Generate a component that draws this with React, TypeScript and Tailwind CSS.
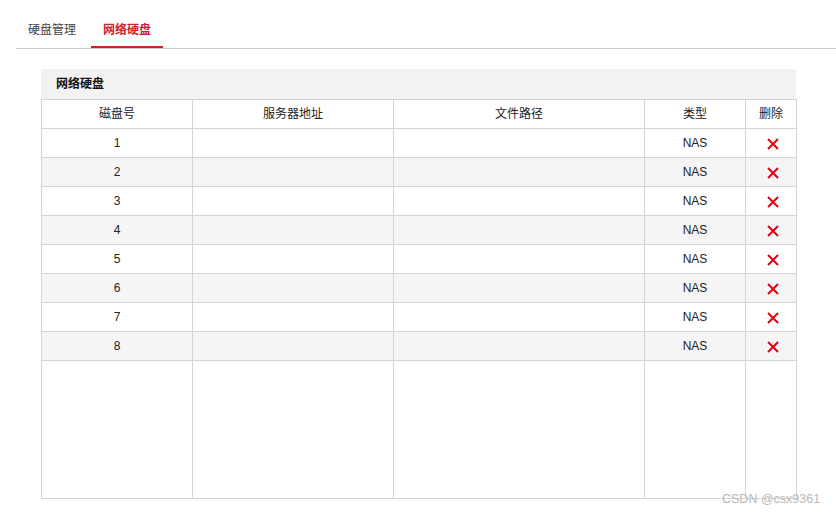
import React from "react";

const rows = [1, 2, 3, 4, 5, 6, 7, 8];

function DeleteIcon() {
  return (
    <svg width="12" height="12" viewBox="0 0 12 12" className="ml-[4px] inline-block">
      <path d="M1 1L11 11M11 1L1 11" stroke="#e60012" strokeWidth="2" />
    </svg>
  );
}

export default function App() {
  const cell = "border border-[#d4d4d4] text-center align-middle p-0";

  return (
    <div className="relative h-[513px] w-[836px] overflow-hidden bg-white text-[12px] text-[#222] font-['Liberation_Sans','Noto_Sans_CJK_SC',sans-serif]">
      <div className="ml-4 mt-[14px] flex gap-[3px] border-b border-[#cccccc]">
        <button type="button" className="h-[34px] px-3 pb-[2px] text-[12px] text-[#444]">
          硬盘管理
        </button>
        <button
          type="button"
          className="h-[34px] border-b-2 border-[#d0212e] px-3 text-[12px] font-bold text-[#d0212e]"
        >
          网络硬盘
        </button>
      </div>

      <div className="ml-[41px] mt-5 w-[755px]">
        <div className="flex h-[30px] items-center bg-[#f2f2f2] pl-[15px] font-bold text-[#111]">网络硬盘</div>
        <table className="w-[755px] table-fixed border-collapse">
          <colgroup>
            <col className="w-[151px]" />
            <col className="w-[201px]" />
            <col className="w-[251px]" />
            <col className="w-[101px]" />
            <col className="w-[51px]" />
          </colgroup>
          <thead>
            <tr className="h-[29px]">
              <th className={`${cell} font-normal`}>磁盘号</th>
              <th className={`${cell} font-normal`}>服务器地址</th>
              <th className={`${cell} font-normal`}>文件路径</th>
              <th className={`${cell} font-normal`}>类型</th>
              <th className={`${cell} font-normal`}>删除</th>
            </tr>
          </thead>
          <tbody>
            {rows.map((n) => (
              <tr key={n} className={`h-[29px] ${n % 2 === 0 ? "bg-[#f5f5f5]" : "bg-white"}`}>
                <td className={cell}>{n}</td>
                <td className={cell}></td>
                <td className={cell}></td>
                <td className={cell}>NAS</td>
                <td className={cell}>
                  <DeleteIcon />
                </td>
              </tr>
            ))}
            <tr className="h-[138px]">
              <td className={cell}></td>
              <td className={cell}></td>
              <td className={cell}></td>
              <td className={cell}></td>
              <td className={cell}></td>
            </tr>
          </tbody>
        </table>
      </div>

      <div className="absolute left-[722px] top-[490px] text-[12.5px] text-[#b8b8b8]">CSDN @csx9361</div>
    </div>
  );
}
